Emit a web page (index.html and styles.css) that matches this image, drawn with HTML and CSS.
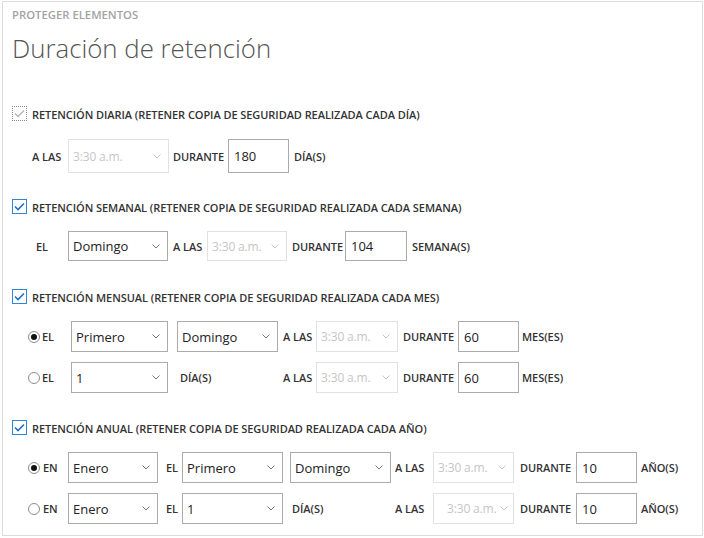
FILE: index.html
```html
<!DOCTYPE html>
<html lang="es">
<head>
<meta charset="utf-8">
<title>Duración de retención</title>
<link rel="stylesheet" href="styles.css">
</head>
<body>
<div class="frame">
  <div class="eyebrow">PROTEGER ELEMENTOS</div>
  <h1 class="title">Duración de retención</h1>

  <div class="check-row cr-1">
    <span class="cb cb-dis"><svg width="11" height="9" viewBox="0 0 11 9"><polyline points="1,4.5 4,7.5 10,1.5" fill="none" stroke="#b5b5b5" stroke-width="1.3"/></svg></span>
    <span class="cb-label">RETENCIÓN DIARIA (RETENER COPIA DE SEGURIDAD REALIZADA CADA DÍA)</span>
  </div>
  <div class="row row-1">
    <span class="lbl lead-daily">A LAS</span>
    <span class="box sel dis w101">3:30 a.m.<svg class="chev" width="8" height="5" viewBox="0 0 8 5"><polyline points="0.5,0.5 4,4 7.5,0.5"/></svg></span>
    <span class="lbl d-dur">DURANTE</span>
    <span class="box inp w61">180</span>
    <span class="lbl pl5">DÍA(S)</span>
  </div>

  <div class="check-row cr-2">
    <span class="cb"><svg width="11" height="9" viewBox="0 0 11 9"><polyline points="1,4.5 4,7.5 10,1.5" fill="none" stroke="#1f6fc4" stroke-width="1.6"/></svg></span>
    <span class="cb-label">RETENCIÓN SEMANAL (RETENER COPIA DE SEGURIDAD REALIZADA CADA SEMANA)</span>
  </div>
  <div class="row row-2">
    <span class="lbl lead-week">EL</span>
    <span class="box sel w100">Domingo<svg class="chev" width="8" height="5" viewBox="0 0 8 5"><polyline points="0.5,0.5 4,4 7.5,0.5"/></svg></span>
    <span class="lbl w-alas">A LAS</span>
    <span class="box sel dis w80">3:30 a.m.<svg class="chev" width="8" height="5" viewBox="0 0 8 5"><polyline points="0.5,0.5 4,4 7.5,0.5"/></svg></span>
    <span class="lbl w-dur">DURANTE</span>
    <span class="box inp w62">104</span>
    <span class="lbl pl5">SEMANA(S)</span>
  </div>

  <div class="check-row cr-3">
    <span class="cb"><svg width="11" height="9" viewBox="0 0 11 9"><polyline points="1,4.5 4,7.5 10,1.5" fill="none" stroke="#1f6fc4" stroke-width="1.6"/></svg></span>
    <span class="cb-label">RETENCIÓN MENSUAL (RETENER COPIA DE SEGURIDAD REALIZADA CADA MES)</span>
  </div>
  <div class="row row-m1">
    <span class="lead lead-month"><span class="radio on"></span><span class="lbl">EL</span></span>
    <span class="box sel w97">Primero<svg class="chev" width="8" height="5" viewBox="0 0 8 5"><polyline points="0.5,0.5 4,4 7.5,0.5"/></svg></span>
    <span class="box sel w101 ml9">Domingo<svg class="chev" width="8" height="5" viewBox="0 0 8 5"><polyline points="0.5,0.5 4,4 7.5,0.5"/></svg></span>
    <span class="lbl m-alas">A LAS</span>
    <span class="box sel dis w82">3:30 a.m.<svg class="chev" width="8" height="5" viewBox="0 0 8 5"><polyline points="0.5,0.5 4,4 7.5,0.5"/></svg></span>
    <span class="lbl m-dur">DURANTE</span>
    <span class="box inp w61">60</span>
    <span class="lbl pl3">MES(ES)</span>
  </div>
  <div class="row row-m2">
    <span class="lead lead-month"><span class="radio"></span><span class="lbl">EL</span></span>
    <span class="box sel w97">1<svg class="chev" width="8" height="5" viewBox="0 0 8 5"><polyline points="0.5,0.5 4,4 7.5,0.5"/></svg></span>
    <span class="lbl m-dias">DÍA(S)</span>
    <span class="lbl m-alas2">A LAS</span>
    <span class="box sel dis w82">3:30 a.m.<svg class="chev" width="8" height="5" viewBox="0 0 8 5"><polyline points="0.5,0.5 4,4 7.5,0.5"/></svg></span>
    <span class="lbl m-dur">DURANTE</span>
    <span class="box inp w61">60</span>
    <span class="lbl pl3">MES(ES)</span>
  </div>

  <div class="check-row cr-4">
    <span class="cb"><svg width="11" height="9" viewBox="0 0 11 9"><polyline points="1,4.5 4,7.5 10,1.5" fill="none" stroke="#1f6fc4" stroke-width="1.6"/></svg></span>
    <span class="cb-label">RETENCIÓN ANUAL (RETENER COPIA DE SEGURIDAD REALIZADA CADA AÑO)</span>
  </div>
  <div class="row row-a1">
    <span class="lead lead-year"><span class="radio on"></span><span class="lbl">EN</span></span>
    <span class="box sel w90">Enero<svg class="chev" width="8" height="5" viewBox="0 0 8 5"><polyline points="0.5,0.5 4,4 7.5,0.5"/></svg></span>
    <span class="lbl a-el">EL</span>
    <span class="box sel w101">Primero<svg class="chev" width="8" height="5" viewBox="0 0 8 5"><polyline points="0.5,0.5 4,4 7.5,0.5"/></svg></span>
    <span class="box sel w101 ml7">Domingo<svg class="chev" width="8" height="5" viewBox="0 0 8 5"><polyline points="0.5,0.5 4,4 7.5,0.5"/></svg></span>
    <span class="lbl a-alas">A LAS</span>
    <span class="box sel dis w81">3:30 a.m.<svg class="chev" width="8" height="5" viewBox="0 0 8 5"><polyline points="0.5,0.5 4,4 7.5,0.5"/></svg></span>
    <span class="lbl a-dur">DURANTE</span>
    <span class="box inp w61">10</span>
    <span class="lbl pl4">AÑO(S)</span>
  </div>
  <div class="row row-a2">
    <span class="lead lead-year"><span class="radio"></span><span class="lbl">EN</span></span>
    <span class="box sel w90">Enero<svg class="chev" width="8" height="5" viewBox="0 0 8 5"><polyline points="0.5,0.5 4,4 7.5,0.5"/></svg></span>
    <span class="lbl a-el">EL</span>
    <span class="box sel w101">1<svg class="chev" width="8" height="5" viewBox="0 0 8 5"><polyline points="0.5,0.5 4,4 7.5,0.5"/></svg></span>
    <span class="lbl a-dias">DÍA(S)</span>
    <span class="lbl a-alas2">A LAS</span>
    <span class="box sel dis w81 shifted">3:30 a.m.<svg class="chev" width="8" height="5" viewBox="0 0 8 5"><polyline points="0.5,0.5 4,4 7.5,0.5"/></svg></span>
    <span class="lbl a-dur">DURANTE</span>
    <span class="box inp w61">10</span>
    <span class="lbl pl4">AÑO(S)</span>
  </div>
</div>
</body>
</html>
```

FILE: styles.css
```css
html, body {
  margin: 0;
  padding: 0;
  background: #fff;
}
body {
  font-family: "Open Sans", "Noto Sans", "Liberation Sans", sans-serif;
  color: #333;
}
.frame {
  box-sizing: border-box;
  margin: 1px 0 0 2px;
  width: 701px;
  height: 535px;
  border: 1px solid #dcdcdc;
  padding: 0 0 0 9px;
}
.eyebrow {
  padding-top: 5px;
  height: 16px;
  line-height: 16px;
  font-size: 11.3px;
  font-weight: 600;
  color: #a3a3a3;
  letter-spacing: 0;
}
.title {
  margin: 8px 0 0 0;
  height: 34px;
  line-height: 34px;
  font-size: 25.8px;
  font-weight: 300;
  color: #555;
  letter-spacing: 0;
}
.check-row {
  display: flex;
  align-items: center;
  height: 16px;
}
.cr-1 { margin-top: 40px; }
.cr-2 { margin-top: 25px; }
.cr-3 { margin-top: 27px; }
.cr-4 { margin-top: 26px; }
.cb {
  box-sizing: border-box;
  width: 15px;
  height: 15px;
  border: 1px solid #2f86d6;
  display: flex;
  align-items: center;
  justify-content: center;
  background: #fff;
  flex: none;
}
.cb-dis {
  border: 1px dotted #8a8a8a;
}
.cb-label {
  margin-left: 5px;
  padding-top: 2px;
  font-size: 11px;
  font-weight: 600;
  color: #333;
  letter-spacing: -0.06px;
  white-space: nowrap;
}
.row {
  display: flex;
  align-items: center;
  height: 31px;
}
.row-1 { margin-top: 18px; height: 34px; }
.row-2 { margin-top: 17px; height: 30px; }
.row-m1 { margin-top: 17px; }
.row-m2 { margin-top: 10px; }
.row-a1 { margin-top: 17px; }
.row-a2 { margin-top: 10px; }

.lbl {
  box-sizing: border-box;
  font-size: 11px;
  font-weight: 600;
  color: #333;
  letter-spacing: -0.06px;
  white-space: nowrap;
  flex: none;
}
.pl3 { padding-left: 3px; }
.pl4 { padding-left: 4px; }
.pl5 { padding-left: 5px; }

.lead-daily { width: 56px; padding-left: 20px; }
.d-dur { width: 59px; padding-left: 4px; }
.lead-week { width: 56px; padding-left: 24px; }
.w-alas { width: 39px; padding-left: 5px; }
.w-dur { width: 58px; padding-left: 5px; }

.lead {
  display: flex;
  align-items: center;
  flex: none;
}
.lead-month { width: 59px; padding-left: 16px; box-sizing: border-box; }
.lead-year { width: 56px; padding-left: 16px; box-sizing: border-box; }
.lead .lbl { margin-left: 2px; }
.lead-year .lbl { margin-left: 3px; }

.m-alas { width: 38px; padding-left: 5px; }
.m-dur { width: 60px; padding-left: 5px; }
.m-dias { width: 115px; padding-left: 12px; }
.m-alas2 { width: 33px; padding-left: 0; }

.a-el { width: 24px; padding-left: 8px; }
.a-alas { width: 42px; padding-left: 4px; }
.a-dur { width: 62px; padding-left: 6px; }
.a-dias { width: 110px; padding-left: 9px; }
.a-alas2 { width: 40px; padding-left: 2px; }

.radio {
  box-sizing: border-box;
  width: 12px;
  height: 12px;
  border: 1px solid #8c8c8c;
  border-radius: 50%;
  display: flex;
  align-items: center;
  justify-content: center;
  flex: none;
}
.radio.on::after {
  content: "";
  width: 6px;
  height: 6px;
  border-radius: 50%;
  background: #111;
}

.box {
  box-sizing: border-box;
  height: 100%;
  display: flex;
  align-items: center;
  flex: none;
  padding-left: 4px;
  font-size: 13px;
  color: #222;
  background: #fff;
  border: 1px solid #ababab;
  white-space: nowrap;
  overflow: hidden;
}
.sel .chev {
  margin-left: auto;
  margin-right: 7px;
  fill: none;
  stroke: #777;
  stroke-width: 1;
  flex: none;
}
.dis {
  border-color: #e2e2e2;
  color: #c6c6c6;
  font-size: 12px;
  letter-spacing: -0.15px;
  padding-left: 4px;
}
.dis .chev { stroke: #c8c8c8; }
.shifted { padding-left: 13px; }
.shifted .chev { margin-left: 3px; margin-right: 4px; }
.inp { padding-left: 5px; }

.w61 { width: 61px; }
.w62 { width: 62px; }
.w80 { width: 80px; }
.w81 { width: 81px; }
.w82 { width: 82px; }
.w90 { width: 90px; }
.w97 { width: 97px; }
.w100 { width: 100px; }
.w101 { width: 101px; }
.ml7 { margin-left: 7px; }
.ml9 { margin-left: 9px; }
```
